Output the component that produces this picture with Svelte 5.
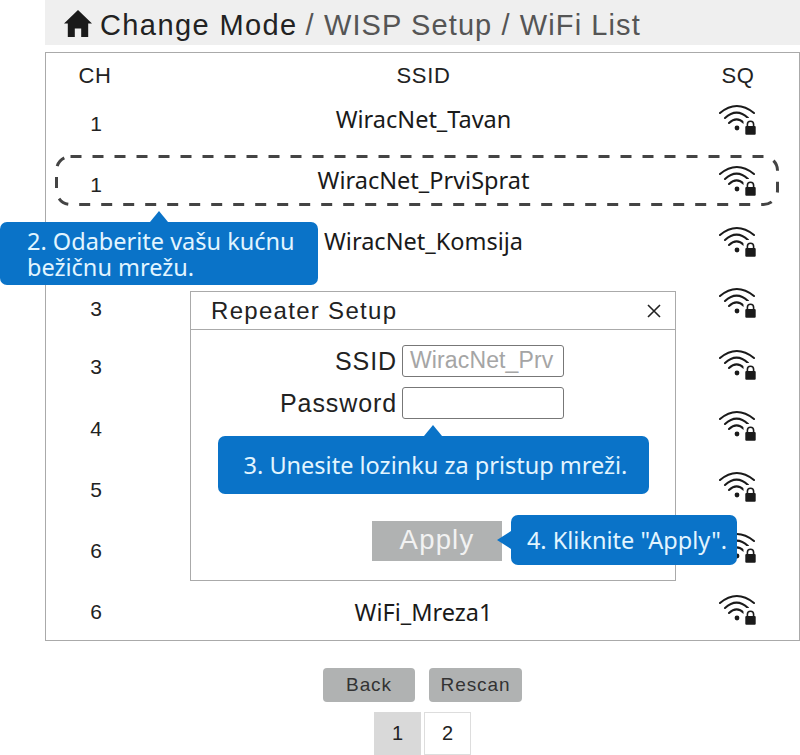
<script lang="ts">
  interface Row {
    ch: string;
    ssid: string;
    dy: number;
  }

  // the channel numbers do not sit quite on the row grid
  const rows: Row[] = [
    { ch: "1", ssid: "WiracNet_Tavan", dy: -1 },
    { ch: "1", ssid: "WiracNet_PrviSprat", dy: -1 },
    { ch: "", ssid: "WiracNet_Komsija", dy: 0 },
    { ch: "3", ssid: "", dy: 1 },
    { ch: "3", ssid: "", dy: -3 },
    { ch: "4", ssid: "", dy: -2 },
    { ch: "5", ssid: "", dy: -2 },
    { ch: "6", ssid: "", dy: -2 },
    { ch: "6", ssid: "WiFi_Mreza1", dy: -3 },
  ];
</script>

<div class="page">
  <header class="crumbs">
    <svg class="home" viewBox="0 0 28 27" width="28" height="27" aria-hidden="true">
      <path d="M14 0 L28 13.6 L24.2 13.6 L24.2 27 L17.2 27 L17.2 18.5 L10.8 18.5 L10.8 27 L3.8 27 L3.8 13.6 L0 13.6 Z" fill="#1a1a1a" />
    </svg>
    <span class="current">Change Mode</span>
    <span class="trail">/ WISP Setup / WiFi List</span>
  </header>

  <section class="list">
    <div class="row head">
      <span class="ch">CH</span>
      <span class="ssid">SSID</span>
      <span class="sq">SQ</span>
    </div>
    {#each rows as row, i}
      <div class="row">
        <span class="ch" style="top: {row.dy}px">{row.ch}</span>
        <span class="ssid name" class:last={i === rows.length - 1}>{row.ssid}</span>
        <span class="sq">
          <svg viewBox="0 0 40 32" width="40" height="32" aria-hidden="true">
            <g fill="none" stroke="#1a1a1a" stroke-width="2.1" stroke-linecap="round">
              <path d="M3 9 Q19.7 -5 37 9" />
              <path d="M8 14 Q19.7 3.4 31 14" />
              <path d="M12 19 Q19.7 11.6 27 19" />
            </g>
            <circle cx="20" cy="24" r="2.4" fill="#1a1a1a" />
            <rect x="26.5" y="14" width="14" height="18" fill="#fff" />
            <path d="M30.4 23 V20.3 a3.1 3.1 0 0 1 6.2 0 V23" fill="none" stroke="#1a1a1a" stroke-width="1.6" />
            <rect x="28.3" y="22" width="10.4" height="8.8" rx="1" fill="#1a1a1a" />
          </svg>
        </span>
      </div>
    {/each}
  </section>

  <footer class="actions">
    <div class="buttons">
      <button class="back">Back</button>
      <button class="rescan">Rescan</button>
    </div>
    <div class="pages">
      <span class="pg active">1</span>
      <span class="pg">2</span>
    </div>
  </footer>

  <svg class="picked" width="724" height="52" aria-hidden="true">
    <rect x="1.5" y="1.5" width="721" height="48" rx="14" fill="none" stroke="#444" stroke-width="3" stroke-dasharray="11 11" />
  </svg>

  <div class="dialog">
    <div class="dialog-title">
      <span>Repeater Setup</span>
      <svg viewBox="0 0 14 14" width="14" height="14" aria-hidden="true">
        <path d="M1 1 L13 13 M13 1 L1 13" stroke="#222" stroke-width="1.6" />
      </svg>
    </div>
    <div class="form">
      <div class="field">
        <span class="field-label">SSID</span>
        <span class="input placeholder">WiracNet_Prv</span>
      </div>
      <div class="field">
        <span class="field-label">Password</span>
        <span class="input"></span>
      </div>
    </div>
    <div class="apply">Apply</div>
  </div>

  <div class="tip tip-select">2. Odaberite vašu kućnu<br />bežičnu mrežu.</div>
  <div class="tip tip-password">3. Unesite lozinku za pristup mreži.</div>
  <div class="tip tip-apply">4. Kliknite "Apply".</div>
</div>

<style>
  :global(body) {
    margin: 0;
    background: #fff;
  }

  .page {
    position: relative;
    width: 800px;
    height: 755px;
    overflow: hidden;
    padding-left: 45px;
    box-sizing: border-box;
    font-family: "Liberation Sans", Arial, sans-serif;
    color: #222;
  }

  .crumbs {
    height: 45px;
    box-sizing: border-box;
    background: #efefef;
    display: flex;
    align-items: center;
    padding: 5px 0 0 19px;
    font-size: 29px;
    white-space: nowrap;
  }

  .home {
    margin: -3px 8px 0 0;
    flex-shrink: 0;
  }

  .current {
    color: #222;
    letter-spacing: 1.4px;
    margin-right: 8px;
  }

  .trail {
    color: #555;
    letter-spacing: 1.1px;
  }

  .list {
    margin-top: 7px;
    height: 589px;
    box-sizing: border-box;
    border: 1px solid #aaa;
    padding-top: 5px;
  }

  .row {
    display: grid;
    grid-template-columns: 100px 555px 1fr;
    align-items: center;
    height: 61.25px;
  }

  .row.head {
    height: 36px;
    font-size: 22px;
    letter-spacing: 0.7px;
  }

  .ch {
    position: relative;
    text-align: center;
    font-size: 21px;
  }

  .row.head .ch {
    font-size: 22px;
    left: -1px;
  }

  .ssid {
    justify-self: center;
  }

  .name {
    font-family: "Noto Sans", sans-serif;
    font-size: 23.5px;
    color: #1a1a1a;
    position: relative;
    top: -6px;
  }

  .name.last {
    top: -3px;
  }

  .sq {
    text-align: center;
    width: 60px;
    margin-left: 7px;
  }

  .sq svg {
    display: block;
    margin: 0 auto;
    position: relative;
    top: -5px;
    left: -1px;
  }

  .actions {
    margin-left: -45px;
    padding-top: 27px;
  }

  .buttons {
    display: flex;
    gap: 14px;
    margin-left: 323px;
  }

  .buttons button {
    height: 34px;
    border: 0;
    border-radius: 4px;
    background: #b0b2b2;
    color: #333;
    font: 19px "Liberation Sans", Arial, sans-serif;
    letter-spacing: 0.9px;
    padding: 0;
  }

  .back {
    width: 92px;
  }

  .rescan {
    width: 93px;
  }

  .pages {
    display: flex;
    gap: 3px;
    margin: 10px 0 0 374px;
  }

  .pg {
    width: 47px;
    height: 43px;
    box-sizing: border-box;
    border: 1px solid #ddd;
    display: flex;
    align-items: center;
    justify-content: center;
    font-size: 20px;
  }

  .pg.active {
    background: #d9d9d9;
    border-color: #d9d9d9;
  }

  .picked {
    position: absolute;
    left: 55px;
    top: 155px;
  }

  .dialog {
    position: absolute;
    left: 190px;
    top: 291px;
    width: 486px;
    height: 290px;
    box-sizing: border-box;
    border: 1px solid #aaa;
    background: #fff;
  }

  .dialog-title {
    height: 37px;
    box-sizing: content-box;
    border-bottom: 1px solid #aaa;
    display: flex;
    align-items: center;
    justify-content: space-between;
    padding: 0 14px 0 20px;
    font-size: 24px;
    letter-spacing: 1.3px;
    color: #222;
  }

  .form {
    display: flex;
    flex-direction: column;
    gap: 10px;
    padding-top: 15px;
  }

  .field {
    display: flex;
    align-items: center;
    gap: 5px;
    height: 32px;
  }

  .field-label {
    width: 206px;
    text-align: right;
    font-size: 25px;
    letter-spacing: 0.9px;
    color: #222;
  }

  .input {
    width: 162px;
    height: 32px;
    box-sizing: border-box;
    border: 1px solid #777;
    border-radius: 3px;
    overflow: hidden;
    white-space: nowrap;
  }

  .placeholder {
    font-size: 23px;
    letter-spacing: 0.13px;
    line-height: 28px;
    padding-left: 7px;
    color: #a5a5a5;
  }

  .apply {
    position: absolute;
    left: 181px;
    top: 229px;
    width: 130px;
    height: 40px;
    box-sizing: border-box;
    padding-bottom: 3px;
    background: #b0b2b2;
    color: #f2f2f2;
    font-size: 27.5px;
    letter-spacing: 1.2px;
    display: flex;
    align-items: center;
    justify-content: center;
  }

  .tip {
    position: absolute;
    box-sizing: border-box;
    background: #0a73c8;
    color: #e2f5ff;
    border-radius: 7px;
    font-family: "Noto Sans", sans-serif;
    font-size: 23.5px;
    white-space: nowrap;
  }

  .tip::before {
    content: "";
    position: absolute;
    border: solid transparent;
  }

  .tip-select {
    left: 0;
    top: 222px;
    width: 318px;
    height: 63px;
    padding: 6px 0 0 27px;
    line-height: 26px;
  }

  .tip-select::before {
    left: 150px;
    top: -11px;
    border-width: 0 9px 11px;
    border-bottom-color: #0a73c8;
  }

  .tip-password {
    left: 218px;
    top: 436px;
    width: 431px;
    height: 58px;
    padding-left: 4px;
    display: flex;
    align-items: center;
    justify-content: center;
  }

  .tip-password::before {
    left: 206px;
    top: -11px;
    border-width: 0 9px 11px;
    border-bottom-color: #0a73c8;
  }

  .tip-apply {
    left: 511px;
    top: 515px;
    width: 226px;
    height: 50px;
    padding-left: 6px;
    display: flex;
    align-items: center;
    justify-content: center;
  }

  .tip-apply::before {
    left: -14px;
    top: 16px;
    border-width: 9px 14px 9px 0;
    border-right-color: #0a73c8;
  }
</style>
